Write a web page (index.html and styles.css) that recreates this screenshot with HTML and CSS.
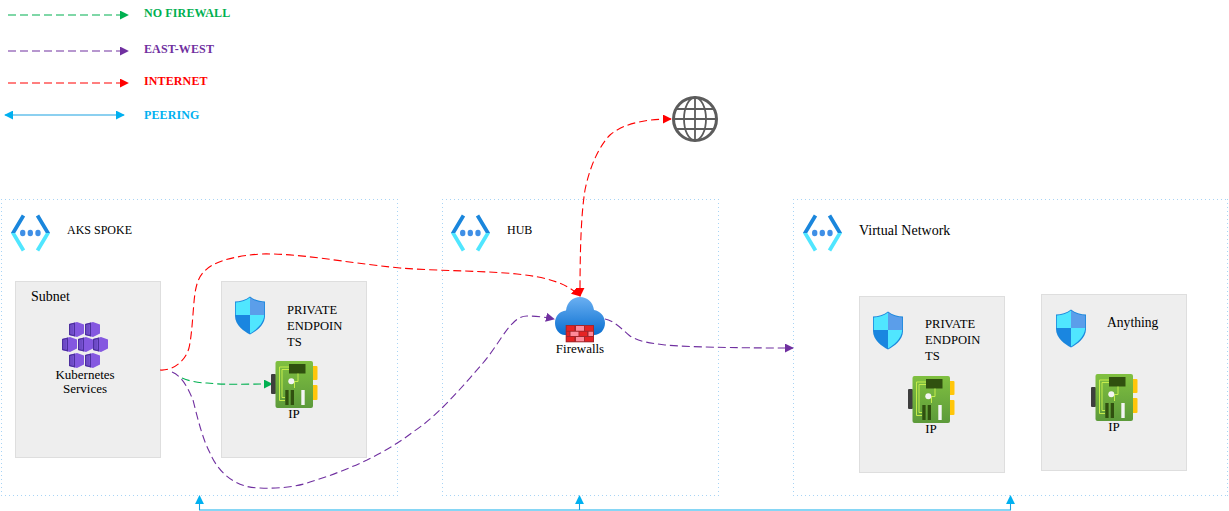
FILE: index.html
```html
<!DOCTYPE html>
<html lang="en">
<head>
<meta charset="utf-8">
<title>Network diagram</title>
<link rel="stylesheet" href="styles.css">
</head>
<body>
<svg class="defs" width="0" height="0" aria-hidden="true">
  <defs>
    <linearGradient id="gCloud" x1="0" y1="0" x2="0" y2="1"><stop offset="0" stop-color="#6bb0f2"/><stop offset="1" stop-color="#0a6fd0"/></linearGradient>
    <linearGradient id="gCard" x1="0" y1="0" x2="0" y2="1"><stop offset="0" stop-color="#80c040"/><stop offset="1" stop-color="#5c9a3a"/></linearGradient>
    <linearGradient id="gNet" x1="0" y1="0" x2="0" y2="1"><stop offset="0" stop-color="#1a86dc"/><stop offset="0.5" stop-color="#1a86dc"/><stop offset="0.5" stop-color="#50e6ff"/><stop offset="1" stop-color="#50e6ff"/></linearGradient>
    <symbol id="net" viewBox="0 0 39 38">
      <path d="M12.500 1.500 2 19 12.500 36.500" fill="none" stroke="url(#gNet)" stroke-width="3.800"/>
      <path d="M26.500 1.500 37 19 26.500 36.500" fill="none" stroke="url(#gNet)" stroke-width="3.800"/>
      <ellipse cx="11.700" cy="19" rx="2.700" ry="3.200" fill="#3f8fe6"/><ellipse cx="19.300" cy="19" rx="2.700" ry="3.200" fill="#3f8fe6"/><ellipse cx="27" cy="19" rx="2.700" ry="3.200" fill="#3f8fe6"/>
    </symbol>
    <symbol id="shield" viewBox="0 0 32 39">
      <path d="M16 .5C12 4 6 5.500 1 5.500V20c0 9 9 15.500 15 18.500C22 35.500 31 29 31 20V5.500C26 5.500 20 4 16 .5Z" fill="#1b87dc"/>
      <path d="M16 1.500C12.500 4.700 7 6.200 1.800 6.400V19H16Z" fill="#50e6ff"/>
      <path d="M16 1.500C19.500 4.700 25 6.200 30.200 6.400V19H16Z" fill="#5b9eea"/>
      <path d="M16 19H30.200C29.800 28 21 34.500 16 37.500Z" fill="#50e6ff"/>
      <path d="M16 19H1.800C2.200 28 11 34.500 16 37.500Z" fill="#1a86e0"/>
    </symbol>
    <symbol id="card" viewBox="0 0 47 47">
      <rect x="0" y="13" width="5" height="20" rx="1" fill="#3e3e3e"/>
      <rect x="40" y="5" width="6.500" height="14" rx="1" fill="#ffc60a"/>
      <rect x="40" y="24" width="6.500" height="15" rx="1" fill="#ffc60a"/>
      <rect x="4.500" y="0" width="37.500" height="47" rx="2" fill="url(#gCard)"/>
      <rect x="18" y="3" width="16.500" height="9.500" fill="#30500f"/>
      <path d="M18 6H8.500V39.500H14M18 8.500H11V36.500H14M27 12.500V20.500H23.500V27" fill="none" stroke="#c5ec4c" stroke-width="1"/>
      <circle cx="20.300" cy="20.300" r="3" fill="#f4f4f4"/>
      <rect x="14.300" y="29" width="3.300" height="15" fill="#30500f"/>
      <rect x="19.700" y="29" width="3.300" height="15" fill="#30500f"/>
      <rect x="30.300" y="29" width="3.400" height="15" fill="#f4f4f4"/>
    </symbol>
    <symbol id="hex" viewBox="0 0 15 15">
      <path d="M8 0 15 2.500 15 11.500 8 15 0 13V2Z" fill="#8458e0"/>
      <path d="M0 2 6 .5V14.500L0 13Z" fill="#4c2f9e"/>
      <path d="M1.500 3 4.700 2.200V12.800L1.500 12Z" fill="#8a63e8"/>
      <path d="M3 3V12" stroke="#4c2f9e" stroke-width=".9"/>
    </symbol>
  </defs>
</svg>

<main class="canvas">
  <section class="zone zone-spoke"></section>
  <section class="zone zone-hub"></section>
  <section class="zone zone-vnet"></section>

  <section class="panel panel-subnet"></section>
  <section class="panel panel-pe1"></section>
  <section class="panel panel-pe2"></section>
  <section class="panel panel-any"></section>

  <svg class="wires" width="1229" height="511" viewBox="0 0 1229 511" aria-hidden="true">
    <defs>
      <marker id="mGreen" viewBox="0 0 10 10" refX="9" refY="5" markerWidth="9" markerHeight="9" markerUnits="userSpaceOnUse" orient="auto"><path d="M0 0 10 5 0 10Z" fill="#00b050"/></marker>
      <marker id="mPurple" viewBox="0 0 10 10" refX="9" refY="5" markerWidth="9" markerHeight="9" markerUnits="userSpaceOnUse" orient="auto"><path d="M0 0 10 5 0 10Z" fill="#7030a0"/></marker>
      <marker id="mRed" viewBox="0 0 10 10" refX="9" refY="5" markerWidth="9" markerHeight="9" markerUnits="userSpaceOnUse" orient="auto-start-reverse"><path d="M0 0 10 5 0 10Z" fill="#ff0000"/></marker>
      <marker id="mBlue" viewBox="0 0 10 10" refX="9" refY="5" markerWidth="9" markerHeight="9" markerUnits="userSpaceOnUse" orient="auto-start-reverse"><path d="M0 0 10 5 0 10Z" fill="#00b0f0"/></marker>
    </defs>
    <path class="dash green" d="M8 15H128"/>
    <path class="dash purple" d="M8 51H128"/>
    <path class="dash red" d="M8 83H128"/>
    <path class="solid" d="M5 115H124" marker-start="url(#mBlue)" marker-end="url(#mBlue)"/>

    <path class="dash red" d="M160 370C172 371 185 362 189 348C193 330 193 300 196 288C200 268 215 258 260 254C300 253 340 262 400 268C440 271 490 271 517 274C545 277 565 282 580 296"/>
    <path class="dash red" d="M671 119C650 119 625 122 610 135C600 145 590 165 585 190C581 215 580 250 580 296" marker-start="url(#mRed)"/>
    <path class="dash purple" d="M172 372C182 376 188 388 193 400C198 420 203 440 210 453C218 472 235 488 260 488C280 489 300 486 310 482C330 476 350 468 367 460C385 451 400 442 413 432C425 424 435 415 443 407C458 392 470 378 483 363C495 349 505 330 513 323C518 318 522 316 527 316C535 316 545 317 554 319"/>
    <path class="dash purple" d="M605 319C612 320 620 327 630 336C640 342 650 343 665 345C690 347 730 348 793 348"/>
    <path class="dash green" d="M182 378C192 382 200 383 207 383C225 385 245 384 272 384"/>

    <path class="solid-plain" d="M199 510H1011"/>
    <path class="solid" d="M199.500 510V496" marker-end="url(#mBlue)"/>
    <path class="solid" d="M579.500 510V496" marker-end="url(#mBlue)"/>
    <path class="solid" d="M1010.500 510V496" marker-end="url(#mBlue)"/>
  </svg>

  <span class="label legend legend-green">NO FIREWALL</span>
  <span class="label legend legend-purple">EAST-WEST</span>
  <span class="label legend legend-red">INTERNET</span>
  <span class="label legend legend-blue">PEERING</span>

  <svg class="node net-spoke"><use href="#net"/></svg>
  <svg class="node net-hub"><use href="#net"/></svg>
  <svg class="node net-vnet"><use href="#net"/></svg>

  <span class="label title-spoke">AKS SPOKE</span>
  <span class="label title-hub">HUB</span>
  <span class="label title-vnet">Virtual Network</span>
  <span class="label title-subnet">Subnet</span>

  <div class="node k8s">
    <svg class="hex"><use href="#hex"/></svg><svg class="hex"><use href="#hex"/></svg>
    <svg class="hex"><use href="#hex"/></svg><svg class="hex"><use href="#hex"/></svg><svg class="hex"><use href="#hex"/></svg>
    <svg class="hex"><use href="#hex"/></svg><svg class="hex"><use href="#hex"/></svg>
  </div>
  <span class="label caption caption-k8s">Kubernetes<br>Services</span>

  <svg class="node shield shield-pe1"><use href="#shield"/></svg>
  <svg class="node shield shield-pe2"><use href="#shield"/></svg>
  <svg class="node shield shield-any"><use href="#shield"/></svg>

  <span class="label pe pe-1">PRIVATE<br>ENDPOIN<br>TS</span>
  <span class="label pe pe-2">PRIVATE<br>ENDPOIN<br>TS</span>
  <span class="label pe pe-3">Anything</span>

  <svg class="node card card-1"><use href="#card"/></svg>
  <svg class="node card card-2"><use href="#card"/></svg>
  <svg class="node card card-3"><use href="#card"/></svg>
  <span class="label caption ip ip-1">IP</span>
  <span class="label caption ip ip-2">IP</span>
  <span class="label caption ip ip-3">IP</span>

  <svg class="node firewall" viewBox="0 0 50 48" aria-hidden="true">
    <path d="M10 38C4 38 0 32 0 26C0 19 5 14 11 13.500C12 5 18 0 25 0C32 0 38 5 39 13C45 14 50 19 50 26C50 33 45 38 39 38Z" fill="url(#gCloud)"/>
    <rect x="10.700" y="28" width="28.300" height="17.300" fill="#a4262c"/>
    <path d="M11.700 29H19.300V33.700H11.700ZM30 29H38V33.700H30ZM11.700 34.700H14.500V39H11.700ZM24.500 34.700H32V39H24.500ZM11.700 40H19.300V44.300H11.700ZM30 40H38V44.300H30Z" fill="#e62323"/>
    <path d="M21 29H29V33.700H21ZM15.500 34.700H23.500V39H15.500ZM33.500 34.700H38V39H33.500ZM21 40H29V44.300H21Z" fill="#ff8a9a"/>
  </svg>
  <span class="label caption caption-fw">Firewalls</span>

  <svg class="node globe" viewBox="0 0 46 46" aria-hidden="true">
    <g fill="none" stroke="#5c5c5c">
      <circle cx="23" cy="23" r="21.500" stroke-width="3"/>
      <ellipse cx="23" cy="23" rx="11" ry="21.500" stroke-width="1.800"/>
      <path d="M23 2V44M2 23H44M4 13H42M4 33H42" stroke-width="1.800"/>
    </g>
  </svg>
</main>
</body>
</html>
```
FILE: styles.css
```css
html, body { margin: 0; padding: 0; background: #fff; }
body { width: 1229px; height: 511px; overflow: hidden; }
.defs { position: absolute; }
.canvas { position: relative; width: 1229px; height: 511px; font-family: "Liberation Serif", serif; font-size: 12px; color: #000; }

.zone {
  position: absolute; top: 199px; height: 297px; box-sizing: border-box;
  background:
    repeating-linear-gradient(90deg, #a8d4f5 0 1px, transparent 1px 4px) left top / 100% 1px no-repeat,
    repeating-linear-gradient(90deg, #a8d4f5 0 1px, transparent 1px 4px) left bottom / 100% 1px no-repeat,
    repeating-linear-gradient(0deg, #a8d4f5 0 1px, transparent 1px 4px) left top / 1px 100% no-repeat,
    repeating-linear-gradient(0deg, #a8d4f5 0 1px, transparent 1px 4px) right top / 1px 100% no-repeat,
    #fff;
}
.zone-spoke { left: 1px; width: 397px; }
.zone-hub { left: 442px; width: 277px; }
.zone-vnet { left: 793px; width: 435px; }

.panel { position: absolute; box-sizing: border-box; width: 146px; height: 177px; background: #eeeeee; border: 1px solid #dedede; }
.panel-subnet { left: 15px; top: 281px; }
.panel-pe1 { left: 221px; top: 281px; }
.panel-pe2 { left: 859px; top: 296px; }
.panel-any { left: 1041px; top: 294px; }

.wires { position: absolute; left: 0; top: 0; z-index: 1; }
.dash { fill: none; stroke-width: 1.100; stroke-dasharray: 8 4; }
.dash.green { stroke: #00b050; marker-end: url(#mGreen); }
.dash.purple { stroke: #7030a0; marker-end: url(#mPurple); }
.dash.red { stroke: #ff0000; marker-end: url(#mRed); }
.solid { fill: none; stroke: #1ba1e2; stroke-width: 1.100; }
.solid-plain { fill: none; stroke: #5ec8f2; stroke-width: 1.600; }

.label { position: absolute; white-space: nowrap; z-index: 2; line-height: 14px; }
.legend { left: 144px; font-weight: bold; letter-spacing: .12px; }
.legend-green { top: 6px; color: #00b050; }
.legend-purple { top: 42px; color: #7030a0; }
.legend-red { top: 74px; color: #ff0000; }
.legend-blue { top: 108px; color: #00b0f0; }

.node { position: absolute; z-index: 2; }
.net-spoke, .net-hub, .net-vnet { top: 214px; width: 39px; height: 38px; }
.net-spoke { left: 11px; }
.net-hub { left: 451px; }
.net-vnet { left: 803px; }

.title-spoke { left: 67px; top: 223px; }
.title-hub { left: 507px; top: 223px; }
.title-vnet { left: 859px; top: 224px; font-size: 14px; }
.title-subnet { left: 31px; top: 290px; font-size: 14px; }

.k8s { left: 62px; top: 322px; width: 47px; height: 46px; }
.hex { position: absolute; width: 15px; height: 15px; }
.hex:nth-child(1) { left: 7px; top: 0; }
.hex:nth-child(2) { left: 23px; top: 0; }
.hex:nth-child(3) { left: 0; top: 15px; }
.hex:nth-child(4) { left: 16px; top: 15px; }
.hex:nth-child(5) { left: 31px; top: 15px; }
.hex:nth-child(6) { left: 7px; top: 31px; }
.hex:nth-child(7) { left: 23px; top: 31px; }

.caption { text-align: center; font-size: 13px; }
.caption-k8s { left: 50px; top: 368px; width: 70px; }
.caption-fw { left: 550px; top: 342px; width: 60px; }

.shield { width: 32px; height: 39px; }
.shield-pe1 { left: 234px; top: 296px; }
.shield-pe2 { left: 872px; top: 311px; }
.shield-any { left: 1055px; top: 309px; }

.pe { line-height: 16px; font-size: 12.600px; }
.pe-1 { left: 287px; top: 302px; }
.pe-2 { left: 925px; top: 316px; }
.pe-3 { left: 1107px; top: 315px; font-size: 13.600px; }

.card { width: 47px; height: 47px; }
.card-1 { left: 271px; top: 361px; }
.card-2 { left: 908px; top: 376px; }
.card-3 { left: 1091px; top: 374px; }
.ip { width: 20px; }
.ip-1 { left: 284px; top: 407px; }
.ip-2 { left: 921px; top: 422px; }
.ip-3 { left: 1104px; top: 420px; }

.firewall { left: 555px; top: 297px; width: 50px; height: 48px; }
.globe { left: 672px; top: 96px; width: 46px; height: 46px; }
```
